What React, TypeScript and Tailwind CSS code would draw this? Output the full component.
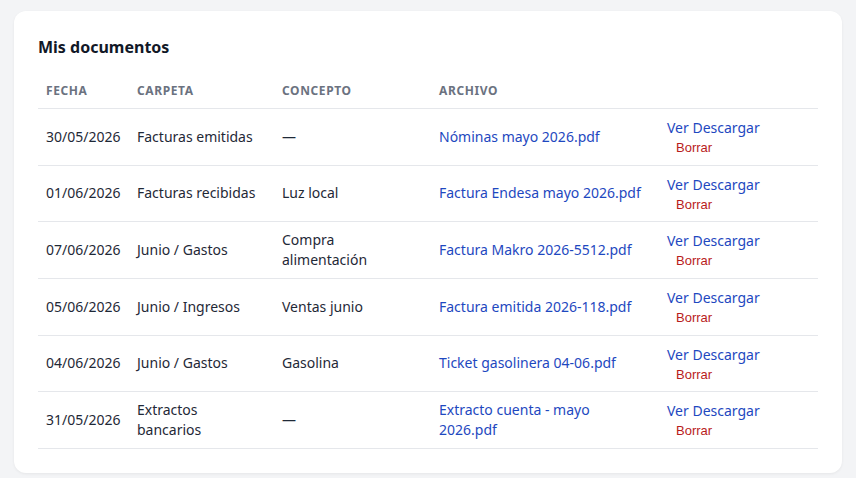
const DOCS = [
  { fecha: '30/05/2026', carpeta: 'Facturas emitidas', concepto: '—', archivo: 'Nóminas mayo 2026.pdf' },
  { fecha: '01/06/2026', carpeta: 'Facturas recibidas', concepto: 'Luz local', archivo: 'Factura Endesa mayo 2026.pdf' },
  { fecha: '07/06/2026', carpeta: 'Junio / Gastos', concepto: 'Compra alimentación', archivo: 'Factura Makro 2026-5512.pdf' },
  { fecha: '05/06/2026', carpeta: 'Junio / Ingresos', concepto: 'Ventas junio', archivo: 'Factura emitida 2026-118.pdf' },
  { fecha: '04/06/2026', carpeta: 'Junio / Gastos', concepto: 'Gasolina', archivo: 'Ticket gasolinera 04-06.pdf' },
  { fecha: '31/05/2026', carpeta: 'Extractos bancarios', concepto: '—', archivo: 'Extracto cuenta - mayo 2026.pdf' },
]

export default function App() {
  return (
    <div className="min-h-[478px] bg-[#f3f4f6] px-[14px] pt-[11px] font-['Noto_Sans',sans-serif] text-[#1f2937]">
      <div className="rounded-xl bg-white p-6 shadow-[0_1px_3px_rgba(0,0,0,0.06)]">
        <h2 className="mb-4 text-base font-bold leading-6 text-[#111827]">Mis documentos</h2>

        <table className="w-full border-collapse text-left text-sm">
          <colgroup>
            <col className="w-[91px]" />
            <col className="w-[145px]" />
            <col className="w-[157px]" />
            <col className="w-[228px]" />
            <col />
          </colgroup>
          <thead>
            <tr className="border-b border-[#e5e7eb]">
              {['Fecha', 'Carpeta', 'Concepto', 'Archivo', ''].map((h, i) => (
                <th key={i} className="px-2 pb-[9px] pt-2 text-xs font-bold uppercase leading-4 tracking-[0.05em] text-[#6b7280]">
                  {h}
                </th>
              ))}
            </tr>
          </thead>
          <tbody>
            {DOCS.map((d) => (
              <tr key={d.archivo} className="border-b border-[#e5e7eb]">
                <td className="px-2 py-2 leading-5">{d.fecha}</td>
                <td className="px-2 py-2 leading-5">
                  <div className="max-w-[124px]">{d.carpeta}</div>
                </td>
                <td className="px-2 py-2 leading-5">{d.concepto}</td>
                <td className="px-2 py-2 leading-5">
                  <a className="text-[#1e48c0]">{d.archivo}</a>
                </td>
                <td className="px-2 pb-[7px] pt-[9px] leading-5">
                  <div className="text-[#1e48c0]">
                    <a>Ver</a> <a>Descargar</a>
                  </div>
                  <button className="block pl-[9px] font-['Liberation_Sans',Arial,sans-serif] text-[13px] leading-[19.5px] text-[#b91c1c]">
                    Borrar
                  </button>
                </td>
              </tr>
            ))}
          </tbody>
        </table>
      </div>
    </div>
  )
}
